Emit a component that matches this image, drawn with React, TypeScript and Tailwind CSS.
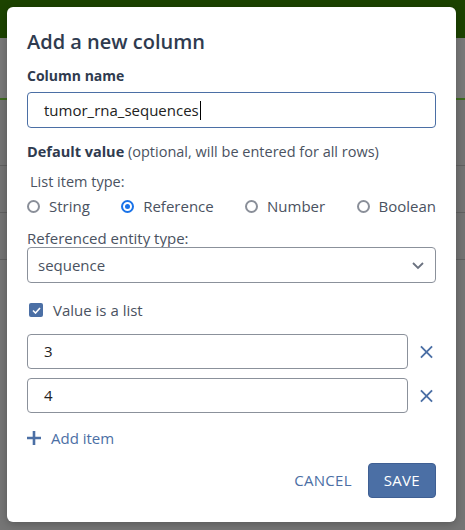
import React, { useState } from 'react';

const font = { fontFamily: '"Open Sans", "Noto Sans", sans-serif' };

const types = ['String', 'Reference', 'Number', 'Boolean'];

const Radio: React.FC<{ label: string; checked: boolean }> = ({ label, checked }) => (
  <label className="flex items-center gap-[9px] text-[15px] leading-[20px] text-[#4a5261]">
    {checked ? (
      <span className="flex h-[13px] w-[13px] items-center justify-center rounded-full border-2 border-[#1a73e8]">
        <span className="h-[5px] w-[5px] rounded-full bg-[#1a73e8]" />
      </span>
    ) : (
      <span className="h-[13px] w-[13px] rounded-full border-2 border-[#8a8f99]" />
    )}
    {label}
  </label>
);

const CloseIcon = () => (
  <svg width="14" height="14" viewBox="0 0 14 14" className="text-[#4b6fa5]">
    <path d="M1 1 L13 13 M13 1 L1 13" stroke="currentColor" strokeWidth="2" strokeLinecap="butt" />
  </svg>
);

export default function App() {
  const [items] = useState(['3', '4']);

  return (
    <div className="relative h-[530px] w-[465px] overflow-hidden bg-[#757575]" style={font}>
      {/* page behind the overlay */}
      <div className="h-[38px] bg-[#1c4300]" />
      <div className="h-[60px] bg-[#797979]" />
      <div className="h-[2px] bg-[#3e6a1e]" />
      <div className="h-[66px] border-b border-[#606060] bg-[#737373]" />
      <div className="h-[47px] border-b border-[#606060] bg-[#737373]" />
      <div className="h-[47px] border-b border-[#606060] bg-[#737373]" />

      <div className="absolute left-[7px] top-[7px] flex h-[515px] w-[449px] flex-col rounded-[6px] bg-white px-5 pt-[22px] shadow-[0_2px_8px_rgba(0,0,0,0.25)]">
        <h2 className="text-[20px] leading-[26px] font-semibold text-[#2f3b4f]">Add a new column</h2>

        <div className="mt-[12px] text-[14px] leading-[18px] font-bold text-[#2f3b4f]">Column name</div>
        <div className="mt-[7px] flex h-[36px] items-center rounded-[4px] border border-[#4b6fa5] px-4 text-[15px] text-[#222]">
          tumor_rna_sequences<span className="ml-[1px] h-[19px] w-px bg-black" />
        </div>

        <div className="mt-[14px] text-[14.5px] leading-[20px] text-[#4a5261]">
          <span className="font-bold text-[#2f3b4f]">Default value</span> (optional, will be entered for all rows)
        </div>

        <div className="mt-[11px] pl-[3px] text-[14.5px] leading-[18px] text-[#4a5261]">List item type:</div>
        <div className="mt-[5px] flex items-center justify-between">
          {types.map(t => (
            <Radio key={t} label={t} checked={t === 'Reference'} />
          ))}
        </div>

        <div className="mt-[13px] text-[15px] leading-[18px] text-[#4a5261]">Referenced entity type:</div>
        <div className="flex h-[36px] items-center justify-between rounded-[4px] border border-[#8b919b] pl-[10px] pr-[10px] text-[15px] text-[#4a5261]">
          <span>sequence</span>
          <svg width="14" height="14" viewBox="0 0 14 14">
            <path d="M2 5 L7 10 L12 5" fill="none" stroke="#6b7280" strokeWidth="1.8" />
          </svg>
        </div>

        <label className="mt-[17px] flex items-center gap-[10px] pl-[2px] text-[15px] leading-[20px] text-[#4a5261]">
          <span className="flex h-[14px] w-[14px] items-center justify-center rounded-[2px] bg-[#4b6fa5]">
            <svg width="9" height="7" viewBox="0 0 9 7">
              <path d="M1 3.5 L3.5 6 L8 1" fill="none" stroke="white" strokeWidth="1.6" />
            </svg>
          </span>
          Value is a list
        </label>

        <div className="mt-[14px] flex flex-col gap-[9px]">
          {items.map(v => (
            <div key={v} className="flex items-center gap-[12px]">
              <div className="flex h-[35px] flex-1 items-center rounded-[4px] border border-[#8b919b] px-4 text-[15px] text-[#222]">
                {v}
              </div>
              <span className="flex w-[16px] justify-center pr-[3px]">
                <CloseIcon />
              </span>
            </div>
          ))}
        </div>

        <div className="mt-[15px] flex items-center gap-[10px] text-[15px] leading-[20px] text-[#4b6fa5]">
          <svg width="14" height="14" viewBox="0 0 14 14">
            <path d="M7 0 V14 M0 7 H14" stroke="currentColor" strokeWidth="2.6" />
          </svg>
          Add item
        </div>

        <div className="mt-[15px] flex items-center justify-end gap-4">
          <button className="text-[15px] tracking-[0.3px] text-[#4b6fa5]">CANCEL</button>
          <button className="h-[35px] rounded-[4px] border border-[#3f5f93] bg-[#4b6fa5] px-[15px] text-[15px] tracking-[0.3px] text-white">
            SAVE
          </button>
        </div>
      </div>
    </div>
  );
}
